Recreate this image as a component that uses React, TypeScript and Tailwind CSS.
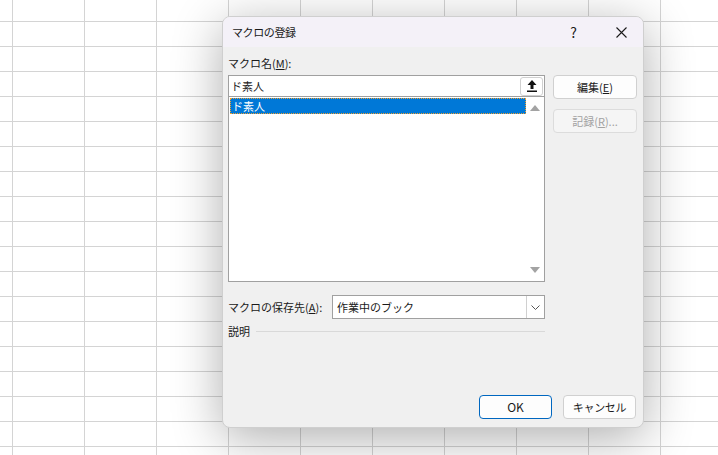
import React from "react";

const font = { fontFamily: '"Noto Sans CJK JP", "Noto Sans", sans-serif' };

function Grid() {
  const cols = Array.from({ length: 11 });
  const rows = Array.from({ length: 19 });
  return (
    <div className="grid grid-cols-[13px_repeat(10,72px)] grid-rows-[22px_repeat(18,25px)]">
      {rows.map((_, r) =>
        cols.map((_, c) => (
          <div key={`${r}-${c}`} className="border-r border-b border-[#d4d4d4]" />
        ))
      )}
    </div>
  );
}

export default function App() {
  return (
    <div className="relative w-[718px] h-[455px] overflow-hidden bg-white" style={font}>
      <Grid />
      <div className="absolute left-[222px] top-[16px] w-[422px] h-[412px] rounded-[8px] bg-[#f0f0f0] border border-[#cfcfcf] shadow-[0_10px_50px_rgba(0,0,0,0.32)] flex flex-col overflow-hidden">
        {/* title bar */}
        <div className="h-[30px] bg-[#f4f1f8] flex items-center pl-[9px] shrink-0">
          <span className="text-[11px] tracking-[-0.4px] text-[#1a1a1a]">マクロの登録</span>
          <span className="ml-auto mr-[39px] text-[14px] text-[#1a1a1a]">?</span>
          <svg width="11" height="11" viewBox="0 0 11 11" className="mr-[16px]">
            <path d="M0.5 0.5 L10.5 10.5 M10.5 0.5 L0.5 10.5" stroke="#1a1a1a" strokeWidth="1.1" />
          </svg>
        </div>
        {/* body */}
        <div className="flex flex-col flex-1 pl-[5px] pr-[6px] pt-[8px] pb-[8px] text-[11px]">
          <div className="h-[16px] flex items-center text-[#1a1a1a] leading-none">
            マクロ名(<span className="underline">M</span>):
          </div>
          <div className="flex mt-[4px] gap-[8px]">
            {/* left column */}
            <div className="flex flex-col w-[317px]">
              <div className="border border-[#a0a0a0] bg-white">
                <div className="h-[21px] flex items-center border-b border-[#a0a0a0] pl-[2px] pr-[1px]">
                  <span className="text-[#1a1a1a]">ド素人</span>
                  <div className="ml-auto w-[23px] h-[19px] rounded-[3px] border border-[#d0d0d0] bg-white flex items-center justify-center">
                    <svg width="10" height="12" viewBox="0 0 10 12">
                      <path d="M5 0 L9.5 5 H6.5 V9 H3.5 V5 H0.5 Z" fill="#111" />
                      <rect x="0" y="10.5" width="10" height="1.5" fill="#111" />
                    </svg>
                  </div>
                </div>
                <div className="h-[184px] flex">
                  <div className="flex-1 pt-[1px] pl-[1px]">
                    <div className="h-[16px] bg-[#0078d7] border border-dotted border-[#f0a030] flex items-center pl-[1px] text-white">
                      ド素人
                    </div>
                  </div>
                  <div className="w-[18px] flex flex-col items-center justify-between py-[8px]">
                    <svg width="10" height="6" viewBox="0 0 10 6">
                      <path d="M5 0 L10 6 H0 Z" fill="#a3a3a3" />
                    </svg>
                    <svg width="10" height="6" viewBox="0 0 10 6">
                      <path d="M0 0 H10 L5 6 Z" fill="#a3a3a3" />
                    </svg>
                  </div>
                </div>
              </div>
              <div className="flex items-center mt-[13px]">
                <span className="text-[#1a1a1a] w-[104px]">
                  マクロの保存先(<span className="underline">A</span>):
                </span>
                <div className="flex-1 h-[24px] border border-[#a0a0a0] bg-white flex items-center">
                  <span className="pl-[4px] text-[#1a1a1a]">作業中のブック</span>
                  <div className="ml-auto w-[18px] h-[22px] border-l border-[#d0d0d0] flex items-center justify-center">
                    <svg width="9" height="5" viewBox="0 0 9 5">
                      <path d="M0.5 0.5 L4.5 4.5 L8.5 0.5" stroke="#555" strokeWidth="1" fill="none" />
                    </svg>
                  </div>
                </div>
              </div>
              <div className="flex items-center mt-[4px] h-[16px]">
                <span className="text-[#1a1a1a]">説明</span>
                <div className="flex-1 ml-[6px] h-px bg-[#d9d9d9]" />
              </div>
            </div>
            {/* right column */}
            <div className="flex flex-col gap-[10px] w-[84px]">
              <div className="w-[84px] h-[24px] rounded-[4px] border border-[#d0d0d0] bg-[#fdfdfd] flex items-center justify-center text-[#1a1a1a]">
                編集(<span className="underline">E</span>)
              </div>
              <div className="w-[84px] h-[24px] rounded-[4px] border border-[#dcdcdc] bg-[#f5f5f5] flex items-center justify-center text-[#a2a2a2]">
                記録(<span className="underline">R</span>)...
              </div>
            </div>
          </div>
          <div className="mt-auto flex justify-end gap-[11px] pr-[1px]">
            <div className="flex items-center justify-center h-[24px] w-[73px] rounded-[4px] border border-[#0067c0] bg-[#fdfdfd] text-[12px] text-[#1a1a1a]">
              OK
            </div>
            <div className="flex items-center justify-center h-[24px] w-[73px] rounded-[4px] border border-[#d0d0d0] bg-[#fdfdfd] text-[#1a1a1a] tracking-[-0.3px]">
              キャンセル
            </div>
          </div>
        </div>
      </div>
    </div>
  );
}
